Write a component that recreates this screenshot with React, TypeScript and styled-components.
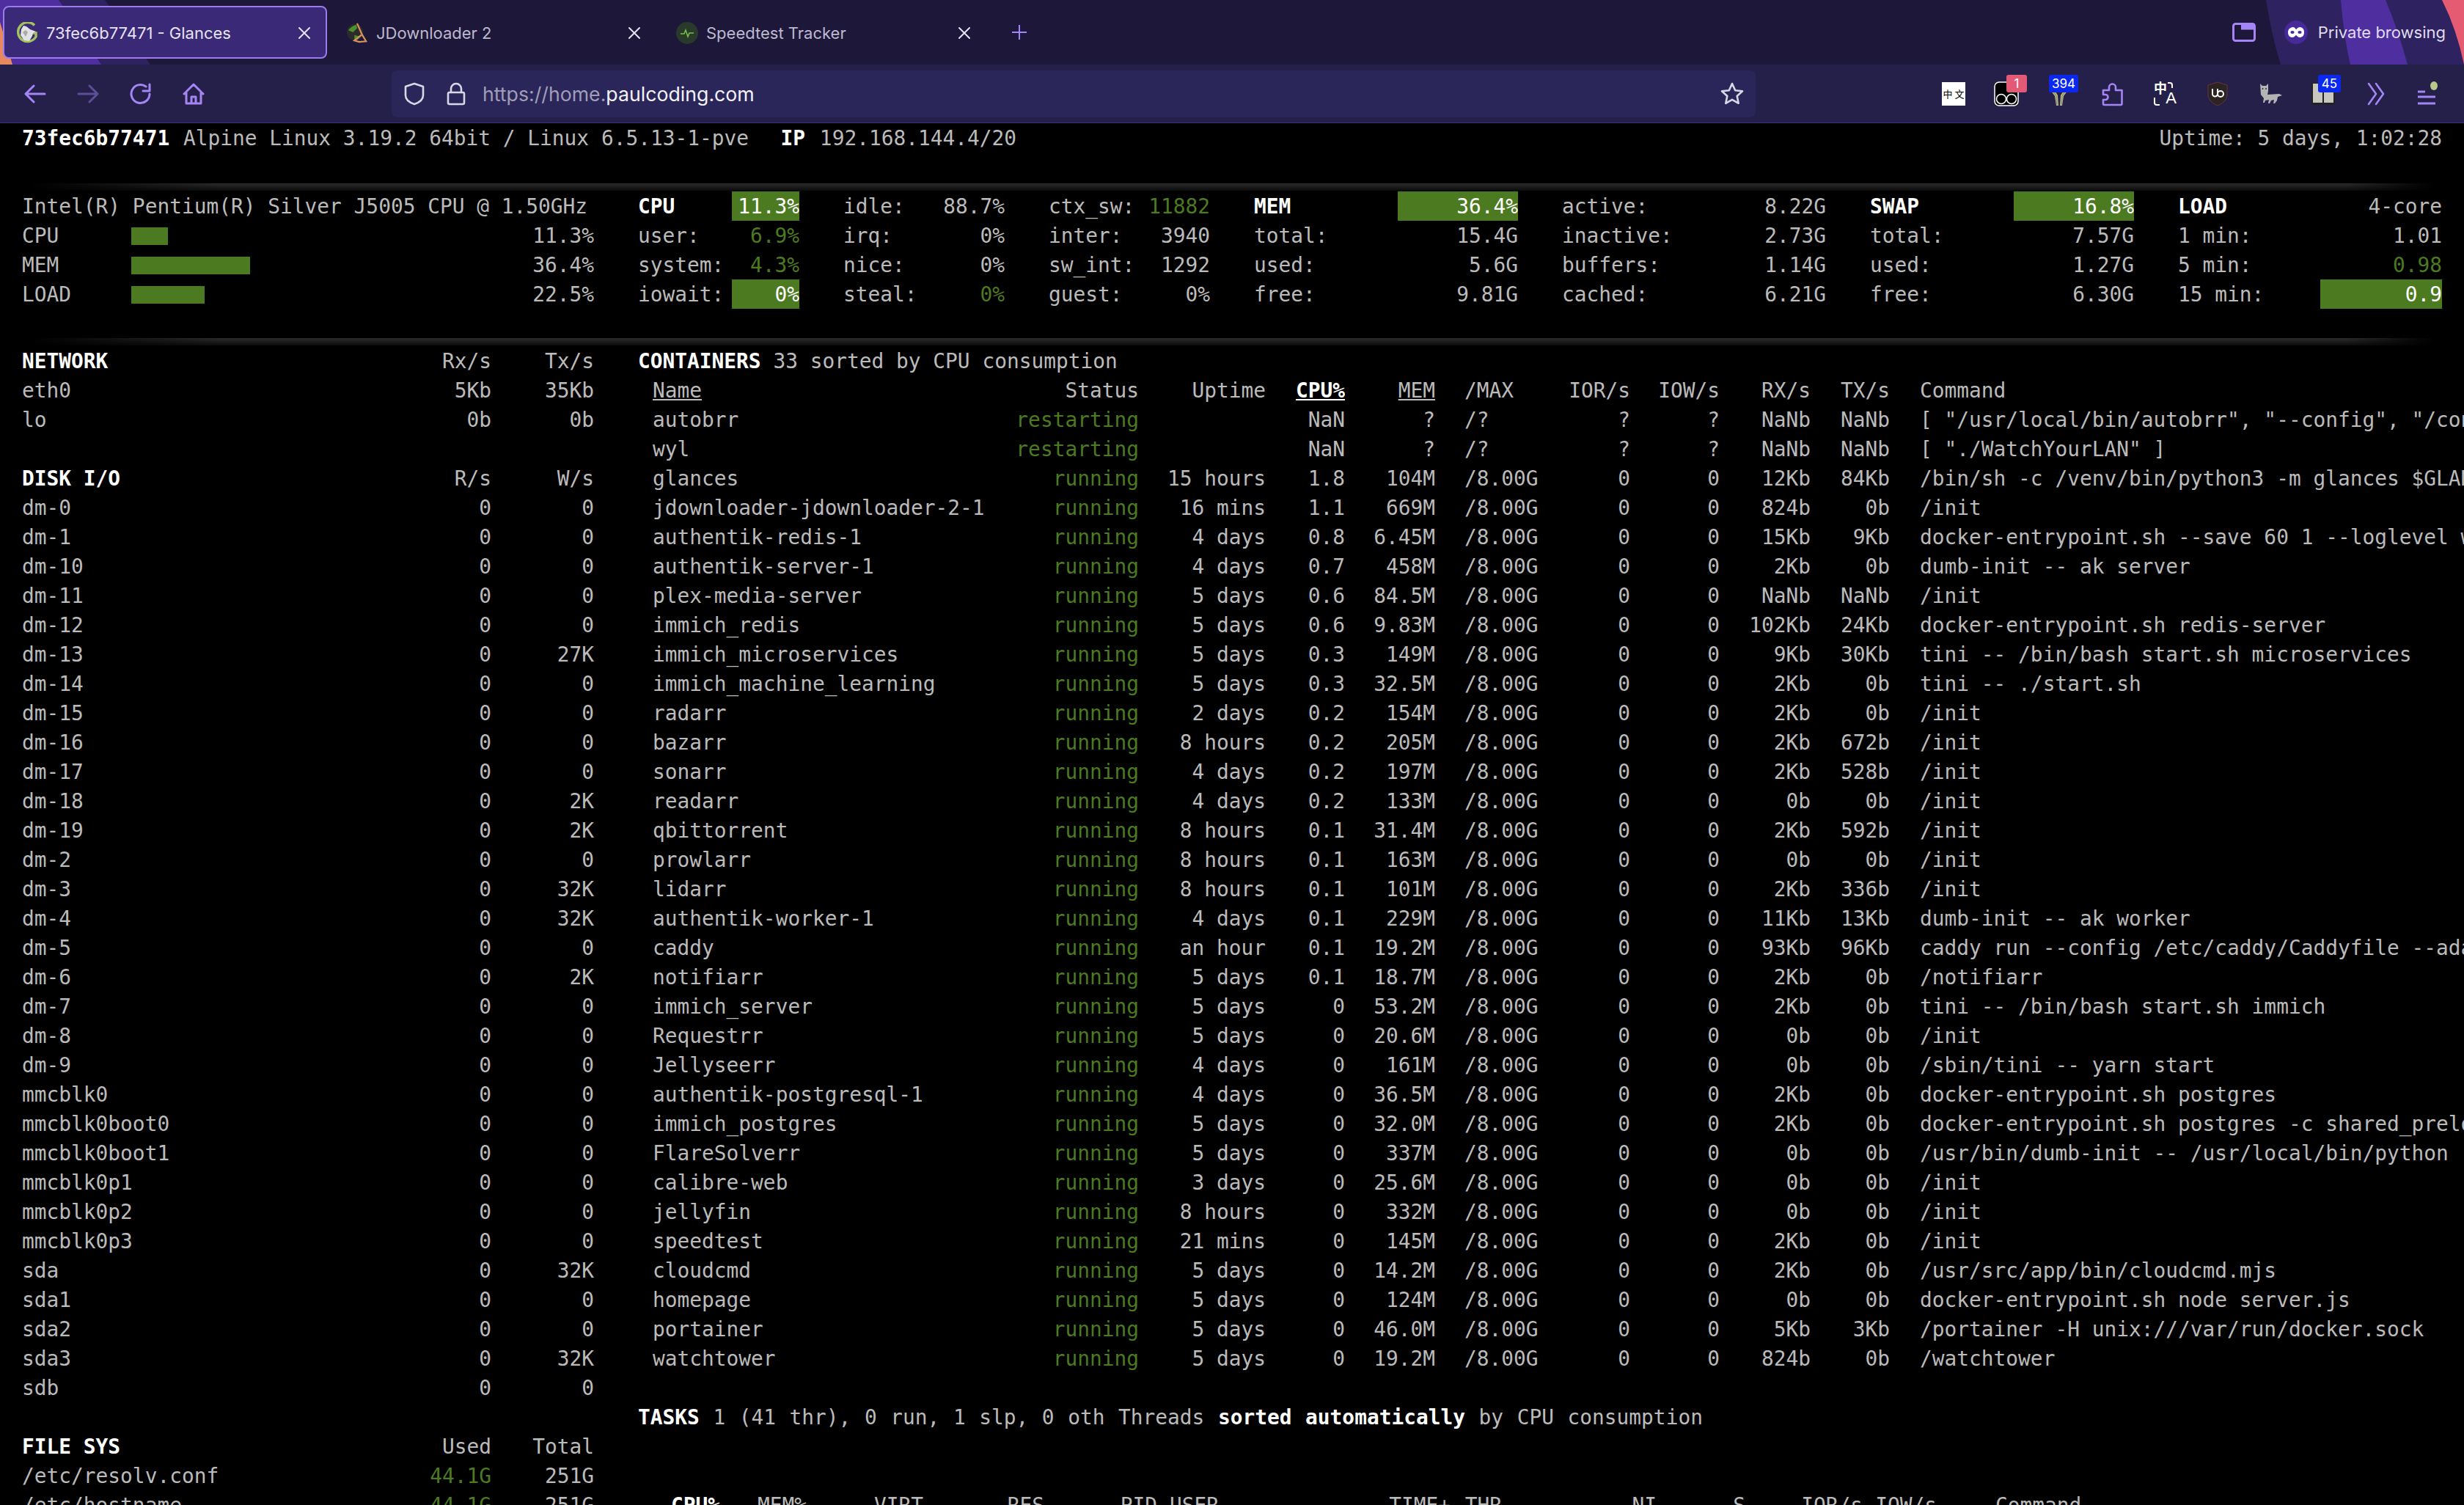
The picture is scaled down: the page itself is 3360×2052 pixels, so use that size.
import React, { FC } from "react";
import styled, { createGlobalStyle } from "styled-components";

const Global = createGlobalStyle`
	html, body { margin: 0; padding: 0; background: #000; }
	#root { width: 3360px; height: 2052px; overflow: hidden; }
`;

const GREEN = "#4c7a21";
const TEXT = "#bbbbbb";

type Tone = "ok" | "bold" | undefined;

const Page = styled.div`
	width: 3360px;
	height: 2052px;
	overflow: hidden;
	display: flex;
	flex-direction: column;
	background: #000;
`;

/* browser chrome */

const TabStrip = styled.div`
	position: relative;
	height: 88px;
	flex: none;
	display: flex;
	align-items: center;
	gap: 8px;
	padding: 0 0 0 4px;
	box-sizing: border-box;
	background: #1d1739;
	font-family: Inter, "Liberation Sans", sans-serif;
	font-size: 22px;
	color: #c9c5d8;
`;

const Decor = styled.svg`
	position: absolute;
	left: 0;
	top: 0;
`;

const Tab = styled.div<{ $active?: boolean }>`
	position: relative;
	width: 442px;
	height: 72px;
	box-sizing: border-box;
	display: flex;
	align-items: center;
	gap: 11px;
	padding: 2px 20px 0 16px;
	border-radius: 8px;
	border: 2px solid ${({ $active }) => ($active ? "#9b7cec" : "transparent")};
	background: ${({ $active }) => ($active ? "#3a2977" : "transparent")};
	color: ${({ $active }) => ($active ? "#e6e3f4" : "#bdb9cf")};
`;

const FaviconSlot = styled.div`
	width: 30px;
	flex: none;
	display: flex;
	justify-content: center;
`;

const TabTitle = styled.span`
	flex: 1;
	white-space: nowrap;
`;

const NewTab = styled.div`
	position: relative;
	width: 40px;
	margin-left: 16px;
	display: flex;
	justify-content: center;
`;

const StripEnd = styled.div`
	position: relative;
	margin-left: auto;
	display: flex;
	align-items: center;
	padding-right: 25px;
	color: #e0dcf0;
`;

const PrivateMark = styled.div`
	display: flex;
	align-items: center;
	gap: 14px;
	margin-left: 39px;
`;

const Toolbar = styled.div`
	height: 80px;
	flex: none;
	box-sizing: border-box;
	display: flex;
	align-items: center;
	padding: 0 12px;
	background: #252049;
	border-bottom: 1px solid #3a3085;
`;

const Slot = styled.div<{ $dim?: boolean }>`
	position: relative;
	width: 72px;
	height: 64px;
	flex: none;
	display: flex;
	align-items: center;
	justify-content: center;
	opacity: ${({ $dim }) => ($dim ? 0.45 : 1)};
`;

const UrlBar = styled.div`
	flex: 1;
	height: 64px;
	margin: 0 234px;
	padding: 0 16px 0 16px;
	box-sizing: border-box;
	display: flex;
	align-items: center;
	border-radius: 8px;
	background: #2b2659;
`;

const UrlIcon = styled.div<{ $w: number }>`
	width: ${({ $w }) => $w}px;
	flex: none;
	display: flex;
`;

const UrlText = styled.div`
	flex: 1;
	font-family: Inter, "Liberation Sans", sans-serif;
	font-size: 26.7px;
	color: #a19db8;
	white-space: pre;
	b {
		font-weight: 400;
		color: #f3f1fa;
	}
`;

const Badge = styled.span<{ $bg: string; $w: number; $right: number }>`
	position: absolute;
	top: 6px;
	right: ${({ $right }) => $right}px;
	width: ${({ $w }) => $w}px;
	height: 24px;
	border-radius: 3px;
	background: ${({ $bg }) => $bg};
	color: #fff;
	font-family: Inter, "Liberation Sans", sans-serif;
	font-size: 17px;
	line-height: 24px;
	text-align: center;
`;

const ZhBox = styled.div`
	width: 32px;
	height: 32px;
	background: #fff;
	color: #000;
	font-family: "Noto Sans CJK SC", sans-serif;
	font-size: 13px;
	line-height: 32px;
	text-align: center;
	white-space: nowrap;
`;

const TranslateMark = styled.div`
	position: relative;
	width: 30px;
	height: 34px;
	color: #fff;
	font-family: "Noto Sans CJK SC", "Liberation Sans", sans-serif;
	line-height: 1;
`;

const TransZh = styled.span`
	position: absolute;
	left: 0;
	top: -1px;
	font-size: 18px;
	font-weight: 700;
`;

const TransA = styled.span`
	position: absolute;
	right: -1px;
	bottom: 0;
	font-family: "Liberation Sans", sans-serif;
	font-size: 22px;
`;

const TransMarks = styled.svg`
	position: absolute;
	left: 0;
	top: 0;
`;

/* glances terminal */

const Terminal = styled.div`
	flex: 1;
	min-height: 0;
	overflow: hidden;
	background: #000;
	color: ${TEXT};
	font-family: "DejaVu Sans Mono", "Liberation Mono", monospace;
	font-size: 27.85px;
	line-height: 41px;
`;

const Line = styled.div`
	height: 40px;
	white-space: pre;
	overflow: hidden;
`;

const TaskLine = styled(Line)`
	word-spacing: 1.8px;
`;

const Strong = styled.span`
	font-weight: 700;
	color: #fff;
`;

const HostName = styled(Strong)`
	margin-right: 2px;
`;

const IpLabel = styled(Strong)`
	margin: 0 3px 0 10px;
`;

const HeaderLine = styled(Line)`
	display: flex;
	justify-content: space-between;
	padding: 0 30px;
`;

const Rule = styled.div`
	height: 10px;
	margin: 0 0 1px 0;
	background: linear-gradient(to bottom, #2b2b2b, #0b0b0b);
	-webkit-mask-image: linear-gradient(to right, transparent 40px, #000 300px, #000 3200px, transparent 3320px);
	mask-image: linear-gradient(to right, transparent 40px, #000 300px, #000 3200px, transparent 3320px);
`;

const TopRule = styled(Rule)`
	margin-top: 42px;
`;

const MidRule = styled(Rule)`
	margin-top: 40px;
`;

const TopPanels = styled.div`
	display: flex;
	gap: 60px;
	padding: 0 30px;
`;

const QuickLook = styled.div`
	width: 780px;
	flex: none;
`;

const QuickRow = styled.div`
	height: 40px;
	display: grid;
	grid-template-columns: 149px 1fr auto;
	align-items: center;
`;

const Bar = styled.div<{ $w: number }>`
	width: ${({ $w }) => $w}px;
	height: 24px;
	background: ${GREEN};
`;

const Stat = styled.div<{ $w: number; $val: number }>`
	width: ${({ $w }) => $w}px;
	flex: none;
	display: grid;
	grid-template-columns: 1fr ${({ $val }) => $val}px;
	grid-auto-rows: 40px;
`;

const StatKey = styled.div<{ $head?: boolean }>`
	white-space: pre;
	font-weight: ${({ $head }) => ($head ? 700 : 400)};
	color: ${({ $head }) => ($head ? "#fff" : TEXT)};
`;

const StatVal = styled.div<{ $tone?: string }>`
	text-align: right;
	white-space: pre;
	overflow: hidden;
	color: ${({ $tone }) => ($tone === "ok" ? GREEN : $tone === "hi" ? "#fff" : TEXT)};
	background: ${({ $tone }) => ($tone === "hi" ? GREEN : "transparent")};
`;

const Columns = styled.div`
	display: flex;
	gap: 60px;
	padding-left: 30px;
`;

const Sidebar = styled.div`
	width: 780px;
	flex: none;
`;

const SideRow = styled.div`
	height: 40px;
	display: grid;
	grid-template-columns: 1fr 142px 140px;
	white-space: pre;
`;

const Cell = styled.div<{ $right?: boolean; $tone?: Tone; $under?: boolean }>`
	text-align: ${({ $right }) => ($right ? "right" : "left")};
	white-space: pre;
	overflow: hidden;
	color: ${({ $tone }) => ($tone === "ok" ? GREEN : $tone === "bold" ? "#fff" : TEXT)};
	font-weight: ${({ $tone }) => ($tone === "bold" ? 700 : 400)};
	text-decoration: ${({ $under }) => ($under ? "underline" : "none")};
`;

const Spacer = styled.div`
	height: 40px;
`;

const Main = styled.div`
	flex: 1;
	min-width: 0;
`;

const ContainerRow = styled.div`
	height: 40px;
	display: grid;
	grid-template-columns: 480px 203px 173px 108px 123px 153px 113px 122px 124px 108px 1fr;
`;

const NameCell = styled(Cell)`
	padding-left: 20px;
`;

const MaxCell = styled(Cell)`
	padding-left: 40px;
`;

const CmdCell = styled(Cell)`
	padding-left: 41px;
`;

const ProcRow = styled.div`
	height: 40px;
	display: grid;
	grid-template-columns: 112px 118px 159px 165px 154px 122px 278px 70px 211px 121px 160px 101px 1fr;
`;

const UserCell = styled(Cell)`
	padding-left: 17px;
`;

const ProcCmd = styled(Cell)`
	padding-left: 80px;
`;

/* icons */

const stroke = { fill: "none", strokeLinecap: "round", strokeLinejoin: "round" } as const;

const CloseIcon = () => (
	<svg width="18" height="18" viewBox="0 0 18 18" style={{ flex: "none" }}>
		<path d="M2 2l14 14M16 2L2 16" stroke="#e6e3f4" strokeWidth="2" strokeLinecap="round" />
	</svg>
);

const GlancesIcon = () => (
	<svg width="28" height="30" viewBox="0 0 28 30">
		<path d="M24 4.5A13 13 0 1 0 26 20v-5h-7" fill="none" stroke="#a3c25e" strokeWidth="3.5" />
		<path d="M9 5l4 1 5 4 8 3-4 2-1 4-4 7-7-1-5-7 1-8z" fill="#e2e2e4" />
		<path d="M8 14l4-3 3 3-3 6z" fill="#aaa" />
	</svg>
);

const JdIcon = () => (
	<svg width="32" height="32" viewBox="0 0 32 32">
		<circle cx="13" cy="15" r="12" fill="#2b2b2d" />
		<path d="M3 12c4-5 8-7 12-8l1 5-6 6zM12 19l8 2-3 4-5 1z" fill="#4c8f2f" />
		<path d="M16 2l7 16 6 10-10 1-7-2 10-8" fill="none" stroke="#d9925e" strokeWidth="2.4" />
	</svg>
);

const SpeedIcon = () => (
	<svg width="30" height="30" viewBox="0 0 30 30">
		<circle cx="15" cy="15" r="15" fill="#2a3a2a" />
		<path d="M6 16h5l2-5 3 9 2-5h6" fill="none" stroke="#72c14a" strokeWidth="1.5" />
	</svg>
);

const PlusIcon = () => (
	<svg width="22" height="22" viewBox="0 0 22 22">
		<path d="M11 1v20M1 11h20" stroke="#a585f5" strokeWidth="2" />
	</svg>
);

const WindowIcon = () => (
	<svg width="32" height="26" viewBox="0 0 32 26">
		<rect x="1.5" y="1.5" width="29" height="23" rx="3" fill="none" stroke="#a585f5" strokeWidth="3" />
		<path d="M12 1.5h18.5v8H12z" fill="#a585f5" />
	</svg>
);

const MaskIcon = () => (
	<svg width="32" height="32" viewBox="0 0 32 32">
		<circle cx="16" cy="16" r="16" fill="#46299a" />
		<path d="M5 16c0-5 4-7 7-7s3 3 4 3 2-3 5-3 6 2 6 7-3 7-6 7-4-3-5-3-2 3-5 3-6-2-6-7z" fill="#fff" />
		<ellipse cx="11" cy="16" rx="2.6" ry="2" fill="#46299a" />
		<ellipse cx="21" cy="16" rx="2.6" ry="2" fill="#46299a" />
	</svg>
);

const BackIcon = () => (
	<svg width="30" height="26" viewBox="0 0 30 26" {...stroke}>
		<path d="M28 13H3M13 2L2 13l11 11" stroke="#a585f5" strokeWidth="3" />
	</svg>
);

const ForwardIcon = () => (
	<svg width="30" height="26" viewBox="0 0 30 26" {...stroke}>
		<path d="M2 13h25M17 2l11 11-11 11" stroke="#a585f5" strokeWidth="3" />
	</svg>
);

const ReloadIcon = () => (
	<svg width="30" height="30" viewBox="0 0 30 30" {...stroke}>
		<path d="M27 15A12.5 12.5 0 1 1 22 5" stroke="#a585f5" strokeWidth="3" />
		<path d="M27 2v9h-9" stroke="#a585f5" strokeWidth="3" />
	</svg>
);

const HomeIcon = () => (
	<svg width="30" height="30" viewBox="0 0 30 30" {...stroke}>
		<path d="M2 15L15 2l13 13M5 12v16h20V12M12 28v-9h6v9" stroke="#a585f5" strokeWidth="3" />
	</svg>
);

const ShieldIcon = () => (
	<svg width="30" height="32" viewBox="0 0 30 32" {...stroke}>
		<path d="M15 2l12 4v12c0 6-6 10-12 12C9 28 3 24 3 18V6z" stroke="#d9d6e5" strokeWidth="2.6" />
	</svg>
);

const LockIcon = () => (
	<svg width="26" height="32" viewBox="0 0 26 32" {...stroke}>
		<rect x="2" y="14" width="22" height="16" rx="2" stroke="#d9d6e5" strokeWidth="2.6" />
		<path d="M6 14V9a7 7 0 0 1 14 0v5" stroke="#d9d6e5" strokeWidth="2.6" />
	</svg>
);

const StarIcon = () => (
	<svg width="32" height="32" viewBox="0 0 32 32" {...stroke}>
		<path d="M16 2l4.2 9.2 9.8 1.1-7.3 6.7 2 9.8-8.7-5-8.7 5 2-9.8L2 12.3l9.8-1.1z" stroke="#d9d6e5" strokeWidth="2.6" />
	</svg>
);

const GogglesIcon = () => (
	<svg width="34" height="34" viewBox="0 0 34 34">
		<rect x="1" y="1" width="32" height="32" rx="6" fill="#000" stroke="#fff" strokeWidth="1.5" />
		<circle cx="10" cy="24" r="6.5" fill="none" stroke="#fff" strokeWidth="1.5" />
		<circle cx="24" cy="24" r="6.5" fill="none" stroke="#fff" strokeWidth="1.5" />
	</svg>
);

const HandsIcon = () => (
	<svg width="26" height="34" viewBox="0 0 26 34">
		<path d="M1 12l6 8 2 13h3l-1-14-5-8zM25 12l-6 8-2 13h-3l1-14 5-8z" fill="#c9b27a" />
		<path d="M4 12l5 8 1 12M22 12l-5 8-1 12" fill="none" stroke="#6f9c86" strokeWidth="1.4" />
	</svg>
);

const PuzzleIcon = () => (
	<svg width="30" height="34" viewBox="0 0 30 34" {...stroke}>
		<path d="M10 32h17a1.5 1.5 0 0 0 1.5-1.5V12H20V8a4.5 4.5 0 0 0-9 0v4H3v6h3a3.5 3.5 0 0 1 0 7H3v5.5A1.5 1.5 0 0 0 4.5 32z" stroke="#a585f5" strokeWidth="2.6" />
	</svg>
);

const UboIcon = () => (
	<svg width="30" height="34" viewBox="0 0 30 34">
		<path d="M15 1l13 4v13c0 7-6 12-13 15C8 30 2 25 2 18V5z" fill="#2c2422" stroke="#8a3a3a" strokeWidth="0.7" />
		<path d="M8 12v7a3.5 3.5 0 0 0 7 0v-7M15 19a4 4 0 1 0 8 0 4 4 0 0 0-8 0" fill="none" stroke="#fff" strokeWidth="2" transform="translate(0 -2)" />
	</svg>
);

const CatIcon = () => (
	<svg width="32" height="32" viewBox="0 0 32 32">
		<path d="M2 2l3 3h5l3-3v10l-1 5 16-1 4 2-6 2-1 5-3 4h-2l1-5-4 1-2 4h-2l1-5-5 1-1 3H6l1-6-4-5z" fill="#b4b4b4" />
		<circle cx="5.5" cy="9" r="1" fill="#333" />
		<circle cx="10" cy="9" r="1" fill="#333" />
	</svg>
);

const BookIcon = () => (
	<svg width="34" height="32" viewBox="0 0 34 32">
		<rect x="1" y="1" width="32" height="30" fill="#222" />
		<rect x="3" y="2" width="13" height="26" fill="#c9c6c0" />
		<rect x="18" y="2" width="13" height="26" fill="#c9c6c0" />
	</svg>
);

const MoreIcon = () => (
	<svg width="26" height="32" viewBox="0 0 26 32" {...stroke}>
		<path d="M3 2l10 14L3 30M13 2l10 14-10 14" stroke="#a585f5" strokeWidth="2.6" />
	</svg>
);

const MenuIcon = () => (
	<svg width="34" height="34" viewBox="0 0 34 34">
		<path d="M2 14h10M2 21h24M2 30h24" stroke="#a585f5" strokeWidth="3" />
		<ellipse cx="24" cy="6" rx="5" ry="6" fill="#b9c98a" />
	</svg>
);

const ChromeDecor = () => (
	<Decor width="3360" height="88" viewBox="0 0 3360 88">
		<path d="M0 0H143L205 88H0Z" fill="#2e2260" />
		<path d="M0 0H80L138 88H0Z" fill="#4f2fa0" />
		<path d="M0 30L17 88H0Z" fill="#e8885f" />
		<path d="M3090 0Q3098 50 3110 88H3360V0Z" fill="#2e2260" />
		<path d="M3192 0Q3196 50 3205 88H3283Q3270 40 3253 0Z" fill="#4f2fa0" />
		<path d="M3330 0H3360V88Q3350 40 3330 0Z" fill="#e55b72" />
	</Decor>
);

/* data */

type StatLine = [string, string, string?];

const panels: { w: number; val: number; lines: StatLine[] }[] = [
	{ w: 220, val: 92, lines: [["CPU", "11.3%", "hi"], ["user:", "6.9%", "ok"], ["system:", "4.3%", "ok"], ["iowait:", "0%", "hi"]] },
	{ w: 220, val: 92, lines: [["idle:", "88.7%"], ["irq:", "0%"], ["nice:", "0%"], ["steal:", "0%", "ok"]] },
	{ w: 220, val: 92, lines: [["ctx_sw:", "11882", "ok"], ["inter:", "3940"], ["sw_int:", "1292"], ["guest:", "0%"]] },
	{ w: 360, val: 164, lines: [["MEM", "36.4%", "hi"], ["total:", "15.4G"], ["used:", "5.6G"], ["free:", "9.81G"]] },
	{ w: 360, val: 164, lines: [["active:", "8.22G"], ["inactive:", "2.73G"], ["buffers:", "1.14G"], ["cached:", "6.21G"]] },
	{ w: 360, val: 164, lines: [["SWAP", "16.8%", "hi"], ["total:", "7.57G"], ["used:", "1.27G"], ["free:", "6.30G"]] },
	{ w: 360, val: 166, lines: [["LOAD", "4-core"], ["1 min:", "1.01"], ["5 min:", "0.98", "ok"], ["15 min:", "0.9", "hi"]] },
];

const disks: [string, string][] = [
	["dm-0", "0"], ["dm-1", "0"], ["dm-10", "0"], ["dm-11", "0"], ["dm-12", "0"], ["dm-13", "27K"],
	["dm-14", "0"], ["dm-15", "0"], ["dm-16", "0"], ["dm-17", "0"], ["dm-18", "2K"], ["dm-19", "2K"],
	["dm-2", "0"], ["dm-3", "32K"], ["dm-4", "32K"], ["dm-5", "0"], ["dm-6", "2K"], ["dm-7", "0"],
	["dm-8", "0"], ["dm-9", "0"], ["mmcblk0", "0"], ["mmcblk0boot0", "0"], ["mmcblk0boot1", "0"],
	["mmcblk0p1", "0"], ["mmcblk0p2", "0"], ["mmcblk0p3", "0"], ["sda", "32K"], ["sda1", "0"],
	["sda2", "0"], ["sda3", "32K"], ["sdb", "0"],
];

// name, uptime, cpu, mem, rx, tx, command
const containers: string[][] = [
	["glances", "15 hours", "1.8", "104M", "12Kb", "84Kb", "/bin/sh -c /venv/bin/python3 -m glances $GLANCES_OPT"],
	["jdownloader-jdownloader-2-1", "16 mins", "1.1", "669M", "824b", "0b", "/init"],
	["authentik-redis-1", "4 days", "0.8", "6.45M", "15Kb", "9Kb", "docker-entrypoint.sh --save 60 1 --loglevel warning"],
	["authentik-server-1", "4 days", "0.7", "458M", "2Kb", "0b", "dumb-init -- ak server"],
	["plex-media-server", "5 days", "0.6", "84.5M", "NaNb", "NaNb", "/init"],
	["immich_redis", "5 days", "0.6", "9.83M", "102Kb", "24Kb", "docker-entrypoint.sh redis-server"],
	["immich_microservices", "5 days", "0.3", "149M", "9Kb", "30Kb", "tini -- /bin/bash start.sh microservices"],
	["immich_machine_learning", "5 days", "0.3", "32.5M", "2Kb", "0b", "tini -- ./start.sh"],
	["radarr", "2 days", "0.2", "154M", "2Kb", "0b", "/init"],
	["bazarr", "8 hours", "0.2", "205M", "2Kb", "672b", "/init"],
	["sonarr", "4 days", "0.2", "197M", "2Kb", "528b", "/init"],
	["readarr", "4 days", "0.2", "133M", "0b", "0b", "/init"],
	["qbittorrent", "8 hours", "0.1", "31.4M", "2Kb", "592b", "/init"],
	["prowlarr", "8 hours", "0.1", "163M", "0b", "0b", "/init"],
	["lidarr", "8 hours", "0.1", "101M", "2Kb", "336b", "/init"],
	["authentik-worker-1", "4 days", "0.1", "229M", "11Kb", "13Kb", "dumb-init -- ak worker"],
	["caddy", "an hour", "0.1", "19.2M", "93Kb", "96Kb", "caddy run --config /etc/caddy/Caddyfile --adapter caddyfile"],
	["notifiarr", "5 days", "0.1", "18.7M", "2Kb", "0b", "/notifiarr"],
	["immich_server", "5 days", "0", "53.2M", "2Kb", "0b", "tini -- /bin/bash start.sh immich"],
	["Requestrr", "5 days", "0", "20.6M", "0b", "0b", "/init"],
	["Jellyseerr", "4 days", "0", "161M", "0b", "0b", "/sbin/tini -- yarn start"],
	["authentik-postgresql-1", "4 days", "0", "36.5M", "2Kb", "0b", "docker-entrypoint.sh postgres"],
	["immich_postgres", "5 days", "0", "32.0M", "2Kb", "0b", "docker-entrypoint.sh postgres -c shared_preload_libraries=vectors.so"],
	["FlareSolverr", "5 days", "0", "337M", "0b", "0b", "/usr/bin/dumb-init -- /usr/local/bin/python"],
	["calibre-web", "3 days", "0", "25.6M", "0b", "0b", "/init"],
	["jellyfin", "8 hours", "0", "332M", "0b", "0b", "/init"],
	["speedtest", "21 mins", "0", "145M", "2Kb", "0b", "/init"],
	["cloudcmd", "5 days", "0", "14.2M", "2Kb", "0b", "/usr/src/app/bin/cloudcmd.mjs"],
	["homepage", "5 days", "0", "124M", "0b", "0b", "docker-entrypoint.sh node server.js"],
	["portainer", "5 days", "0", "46.0M", "5Kb", "3Kb", "/portainer -H unix:///var/run/docker.sock"],
	["watchtower", "5 days", "0", "19.2M", "824b", "0b", "/watchtower"],
];

const Side: FC<{ a: string; b?: string; c?: string; head?: boolean; bTone?: Tone }> = ({ a, b, c, head, bTone }) => (
	<SideRow>
		<Cell $tone={head ? "bold" : undefined}>{a}</Cell>
		<Cell $right $tone={bTone}>{b}</Cell>
		<Cell $right>{c}</Cell>
	</SideRow>
);

const RestartRow: FC<{ name: string; cmd: string }> = ({ name, cmd }) => (
	<ContainerRow>
		<NameCell>{name}</NameCell>
		<Cell $right $tone="ok">restarting</Cell>
		<Cell $right />
		<Cell $right>NaN</Cell>
		<Cell $right>?</Cell>
		<MaxCell>/?</MaxCell>
		<Cell $right>?</Cell>
		<Cell $right>?</Cell>
		<Cell $right>NaNb</Cell>
		<Cell $right>NaNb</Cell>
		<CmdCell>{cmd}</CmdCell>
	</ContainerRow>
);

export default function App() {
	return (
		<Page>
			<Global />
			<TabStrip>
				<ChromeDecor />
				<Tab $active>
					<FaviconSlot><GlancesIcon /></FaviconSlot>
					<TabTitle>73fec6b77471 - Glances</TabTitle>
					<CloseIcon />
				</Tab>
				<Tab>
					<FaviconSlot><JdIcon /></FaviconSlot>
					<TabTitle>JDownloader 2</TabTitle>
					<CloseIcon />
				</Tab>
				<Tab>
					<FaviconSlot><SpeedIcon /></FaviconSlot>
					<TabTitle>Speedtest Tracker</TabTitle>
					<CloseIcon />
				</Tab>
				<NewTab><PlusIcon /></NewTab>
				<StripEnd>
					<WindowIcon />
					<PrivateMark>
						<MaskIcon />
						<span>Private browsing</span>
					</PrivateMark>
				</StripEnd>
			</TabStrip>
			<Toolbar>
				<Slot><BackIcon /></Slot>
				<Slot $dim><ForwardIcon /></Slot>
				<Slot><ReloadIcon /></Slot>
				<Slot><HomeIcon /></Slot>
				<UrlBar>
					<UrlIcon $w={59}><ShieldIcon /></UrlIcon>
					<UrlIcon $w={49}><LockIcon /></UrlIcon>
					<UrlText>https://home.<b>paulcoding.com</b></UrlText>
					<StarIcon />
				</UrlBar>
				<Slot><ZhBox>中 文</ZhBox></Slot>
				<Slot><GogglesIcon /><Badge $bg="#e25a75" $w={28} $right={8}>1</Badge></Slot>
				<Slot><HandsIcon /><Badge $bg="#0a28f0" $w={40} $right={10}>394</Badge></Slot>
				<Slot><PuzzleIcon /></Slot>
				<Slot>
					<TranslateMark>
						<TransMarks width="30" height="34" viewBox="0 0 30 34" fill="none" stroke="#fff" strokeWidth="2">
							<path d="M19 2h3a3 3 0 0 1 3 3v4M1 22v7a3 3 0 0 0 3 3h4" />
						</TransMarks>
						<TransZh>中</TransZh>
						<TransA>A</TransA>
					</TranslateMark>
				</Slot>
				<Slot><UboIcon /></Slot>
				<Slot><CatIcon /></Slot>
				<Slot><BookIcon /><Badge $bg="#0a28f0" $w={31} $right={12}>45</Badge></Slot>
				<Slot><MoreIcon /></Slot>
				<Slot><MenuIcon /></Slot>
			</Toolbar>
			<Terminal>
				<HeaderLine>
					<span><HostName>73fec6b77471</HostName> Alpine Linux 3.19.2 64bit / Linux 6.5.13-1-pve  <IpLabel>IP</IpLabel> 192.168.144.4/20</span>
					<span>Uptime: 5 days, 1:02:28</span>
				</HeaderLine>
				<TopRule />
				<TopPanels>
					<QuickLook>
						<Line>Intel(R) Pentium(R) Silver J5005 CPU @ 1.50GHz</Line>
						<QuickRow><span>CPU</span><Bar $w={50} /><span>11.3%</span></QuickRow>
						<QuickRow><span>MEM</span><Bar $w={162} /><span>36.4%</span></QuickRow>
						<QuickRow><span>LOAD</span><Bar $w={100} /><span>22.5%</span></QuickRow>
					</QuickLook>
					{panels.map((panel, i) => (
						<Stat key={i} $w={panel.w} $val={panel.val}>
							{panel.lines.map(([key, value, tone], j) => (
								<React.Fragment key={j}>
									<StatKey $head={key === key.toUpperCase() && !key.includes(":")}>{key}</StatKey>
									<StatVal $tone={tone}>{value}</StatVal>
								</React.Fragment>
							))}
						</Stat>
					))}
				</TopPanels>
				<MidRule />
				<Columns>
					<Sidebar>
						<Side a="NETWORK" b="Rx/s" c="Tx/s" head />
						<Side a="eth0" b="5Kb" c="35Kb" />
						<Side a="lo" b="0b" c="0b" />
						<Spacer />
						<Side a="DISK I/O" b="R/s" c="W/s" head />
						{disks.map(([name, write]) => (
							<Side key={name} a={name} b="0" c={write} />
						))}
						<Spacer />
						<Side a="FILE SYS" b="Used" c="Total" head />
						<Side a="/etc/resolv.conf" b="44.1G" c="251G" bTone="ok" />
						<Side a="/etc/hostname" b="44.1G" c="251G" bTone="ok" />
					</Sidebar>
					<Main>
						<Line><Strong>CONTAINERS</Strong> 33 sorted by CPU consumption</Line>
						<ContainerRow>
							<NameCell><Cell as="span" $under>Name</Cell></NameCell>
							<Cell $right>Status</Cell>
							<Cell $right>Uptime</Cell>
							<Cell $right $tone="bold" $under>CPU%</Cell>
							<Cell $right $under>MEM</Cell>
							<MaxCell>/MAX</MaxCell>
							<Cell $right>IOR/s</Cell>
							<Cell $right>IOW/s</Cell>
							<Cell $right>RX/s</Cell>
							<Cell $right>TX/s</Cell>
							<CmdCell>Command</CmdCell>
						</ContainerRow>
						<RestartRow name="autobrr" cmd={'[ "/usr/local/bin/autobrr", "--config", "/config" ]'} />
						<RestartRow name="wyl" cmd={'[ "./WatchYourLAN" ]'} />
						{containers.map(([name, uptime, cpu, mem, rx, tx, cmd]) => (
							<ContainerRow key={name}>
								<NameCell>{name}</NameCell>
								<Cell $right $tone="ok">running</Cell>
								<Cell $right>{uptime}</Cell>
								<Cell $right>{cpu}</Cell>
								<Cell $right>{mem}</Cell>
								<MaxCell>/8.00G</MaxCell>
								<Cell $right>0</Cell>
								<Cell $right>0</Cell>
								<Cell $right>{rx}</Cell>
								<Cell $right>{tx}</Cell>
								<CmdCell>{cmd}</CmdCell>
							</ContainerRow>
						))}
						<Spacer />
						<TaskLine><Strong>TASKS</Strong> 1 (41 thr), 0 run, 1 slp, 0 oth Threads <Strong>sorted automatically</Strong> by CPU consumption</TaskLine>
						<Spacer />
						<Spacer />
						<ProcRow>
							<Cell $right $tone="bold" $under>CPU%</Cell>
							<Cell $right>MEM%</Cell>
							<Cell $right>VIRT</Cell>
							<Cell $right>RES</Cell>
							<Cell $right>PID</Cell>
							<UserCell>USER</UserCell>
							<Cell $right>TIME+</Cell>
							<Cell $right>THR</Cell>
							<Cell $right>NI</Cell>
							<Cell $right>S</Cell>
							<Cell $right>IOR/s</Cell>
							<Cell $right>IOW/s</Cell>
							<ProcCmd>Command</ProcCmd>
						</ProcRow>
					</Main>
				</Columns>
			</Terminal>
		</Page>
	);
}
